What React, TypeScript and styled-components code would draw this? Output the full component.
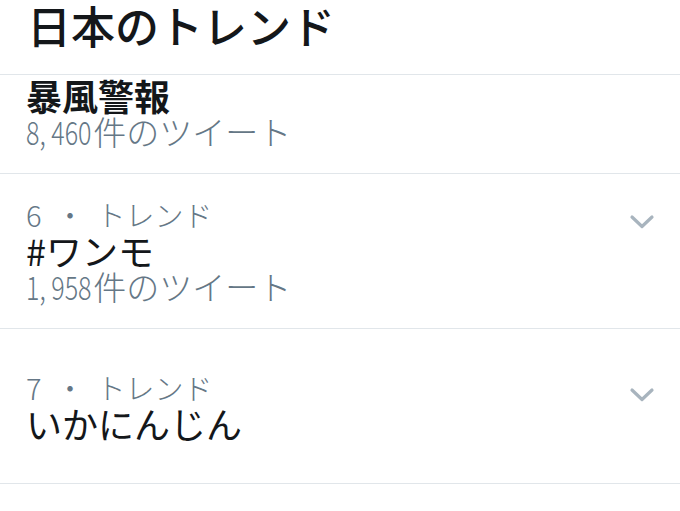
import React from 'react';
import styled, { createGlobalStyle } from 'styled-components';

const GlobalStyle = createGlobalStyle`
    body {
        margin: 0;
        background: #ffffff;
        font-family: 'Noto Sans CJK JP', 'Noto Sans', sans-serif;
        overflow: hidden;
    }
    * {
        box-sizing: border-box;
    }
`;

const Page = styled.div`
    width: 680px;
    height: 511px;
    overflow: hidden;
    background: #ffffff;
`;

const Header = styled.div`
    height: 75px;
    padding-left: 27px;
    border-bottom: 1px solid #e1e6ea;
`;

const Title = styled.h1`
    margin: 0;
    font-size: 44px;
    font-weight: 500;
    line-height: 50px;
    color: #14171a;
    white-space: nowrap;
`;

const Item = styled.div<{ $cut?: boolean }>`
    display: flex;
    flex-direction: column;
    justify-content: ${props => (props.$cut ? 'flex-end' : 'center')};
    height: ${props => (props.$cut ? '99px' : '155px')};
    padding: ${props => (props.$cut ? '0 24px 24px 26px' : '0 24px 2px 26px')};
    border-bottom: 1px solid #e1e6ea;
`;

const Row = styled.div`
    display: flex;
    justify-content: space-between;
    align-items: flex-start;
`;

const Texts = styled.div`
    display: flex;
    flex-direction: column;
`;

const Rank = styled.div`
    font-size: 29px;
    font-weight: 300;
    line-height: 36px;
    color: #657786;
    white-space: nowrap;
`;

const Dot = styled.span`
    margin: 0 12px 0 14px;
`;

const Name = styled.div<{ $bold?: boolean }>`
    font-size: 36px;
    font-weight: ${props => (props.$bold ? 700 : 400)};
    line-height: 36px;
    color: #14171a;
    white-space: nowrap;
`;

const Count = styled.div`
    font-size: 33px;
    font-weight: 300;
    line-height: 36px;
    color: #657786;
    white-space: nowrap;
`;

/* the numbers in the screenshot use narrow half-width digits */
const Digits = styled.span`
    display: inline-block;
    transform: scaleX(0.76);
    transform-origin: left center;
    margin-right: -19px;
`;

const Chevron = styled.svg`
    flex-shrink: 0;
    margin-top: 18px;
`;

type Trend = {
    rank?: number;
    name: string;
    count?: string;
    bold?: boolean;
    cut?: boolean;
};

const trends: Trend[] = [
    { name: '暴風警報', count: '8, 460', bold: true, cut: true },
    { rank: 6, name: '#ワンモ', count: '1, 958' },
    { rank: 7, name: 'いかにんじん' },
];

const ChevronIcon = () => (
    <Chevron width="28" height="16" viewBox="0 0 28 16">
        <polyline
            points="4,3 14,12.5 24,3"
            fill="none"
            stroke="#a8b4be"
            strokeWidth="3.2"
            strokeLinecap="round"
            strokeLinejoin="round"
        />
    </Chevron>
);

const App = () => (
    <Page>
        <GlobalStyle />
        <Header>
            <Title>日本のトレンド</Title>
        </Header>
        {trends.map(trend => (
            <Item key={trend.name} $cut={trend.cut}>
                <Row>
                    <Texts>
                        {trend.rank && (
                            <Rank>
                                {trend.rank}
                                <Dot>・</Dot>
                                トレンド
                            </Rank>
                        )}
                        <Name $bold={trend.bold}>{trend.name}</Name>
                        {trend.count && (
                            <Count>
                                <Digits>{trend.count}</Digits>件のツイート
                            </Count>
                        )}
                    </Texts>
                    {trend.rank && <ChevronIcon />}
                </Row>
            </Item>
        ))}
    </Page>
);

export default App;
